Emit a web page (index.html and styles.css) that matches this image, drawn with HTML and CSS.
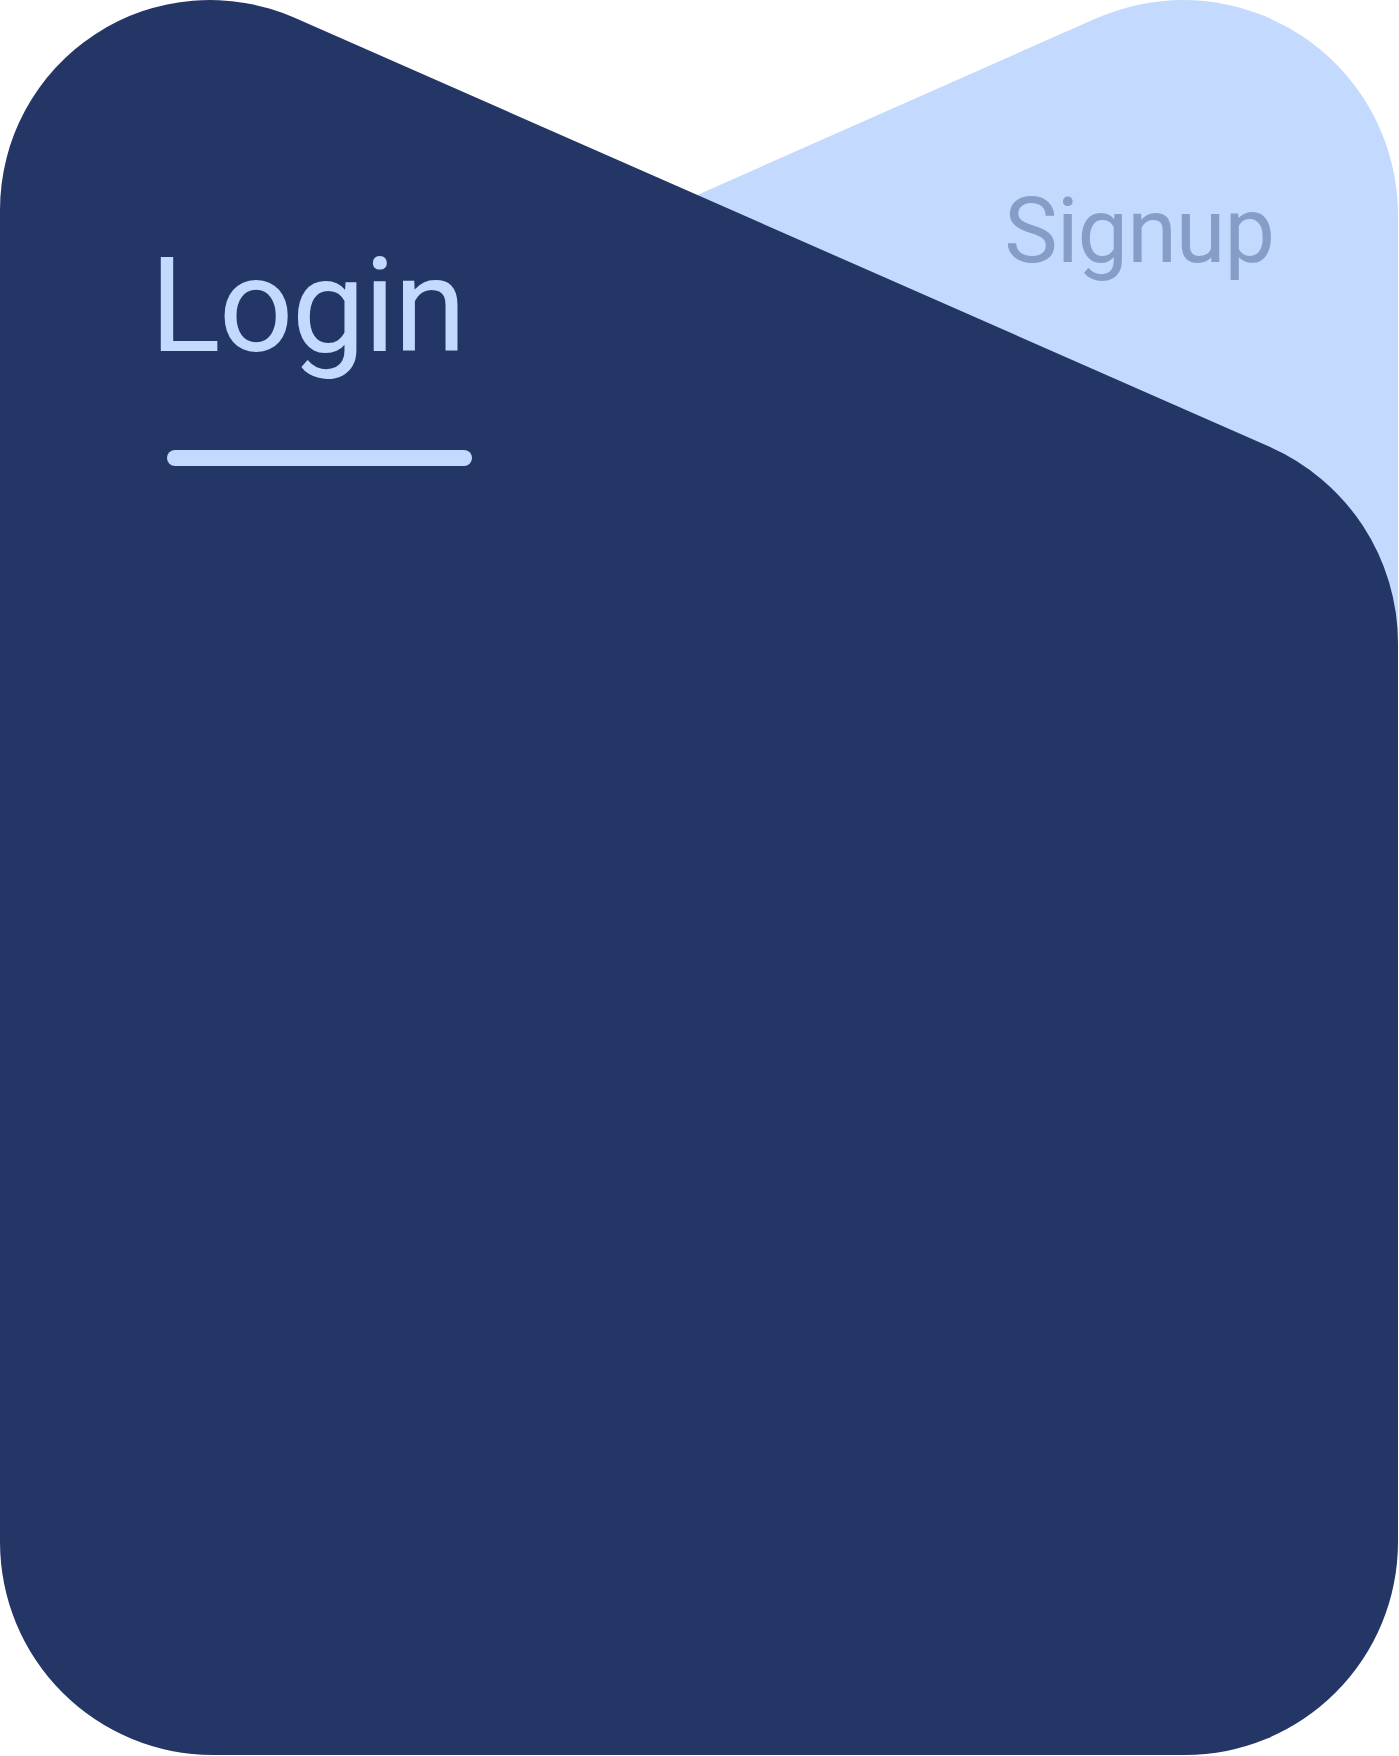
FILE: index.html
```html
<!DOCTYPE html>
<html lang="en">
<head>
<meta charset="utf-8">
<title>Login / Signup</title>
<link rel="stylesheet" href="styles.css">
</head>
<body>
<div class="card">
  <svg class="card-bg" width="1398" height="1755" viewBox="0 0 1398 1755" aria-hidden="true">
    <path class="tab-back" d="M1398,215 A215 215 0 0 0 1183,0 Q1140,0 1096.4,18.2 L128.4,446.8 A215 215 0 0 0 0,643.6 L0,1200 L1398,1200 Z"/>
    <path class="tab-front" d="M0,210 A210 210 0 0 1 294.6,17.8 L1269.6,446.8 A215 215 0 0 1 1398,643.6 L1398,1542 A213 213 0 0 1 1185,1755 L213,1755 A213 213 0 0 1 0,1542 Z"/>
  </svg>
  <div class="tabs">
    <div class="tab tab-active">
      <span class="tab-label">Login</span>
      <span class="tab-bar"></span>
    </div>
    <div class="tab tab-inactive">
      <span class="tab-label">Signup</span>
    </div>
  </div>
</div>
</body>
</html>
```
FILE: styles.css
```css
html, body {
  margin: 0;
  padding: 0;
  background: #ffffff;
}
body {
  font-family: "Roboto", "Liberation Sans", sans-serif;
}
.card {
  position: relative;
  width: 1398px;
  height: 1755px;
}
.card-bg {
  position: absolute;
  top: 0;
  left: 0;
  display: block;
}
.tab-back {
  fill: #c3dafe;
}
.tab-front {
  fill: #243665;
}
.tabs {
  position: relative;
  display: flex;
  align-items: flex-start;
  padding: 0 124px 0 150px;
}
.tab {
  display: flex;
  flex-direction: column;
}
.tab-label {
  display: block;
  line-height: 1;
}
.tab-active {
  padding-top: 241px;
}
.tab-active .tab-label {
  font-size: 131px;
  letter-spacing: -1.7px;
  color: #c3dafe;
}
.tab-bar {
  display: block;
  width: 305px;
  height: 16px;
  margin: 78px 0 0 17px;
  border-radius: 8px;
  background: #c3dafe;
}
.tab-inactive {
  margin-left: auto;
  padding-top: 187px;
}
.tab-inactive .tab-label {
  font-size: 90px;
  letter-spacing: -1px;
  color: #869ec7;
}
```
